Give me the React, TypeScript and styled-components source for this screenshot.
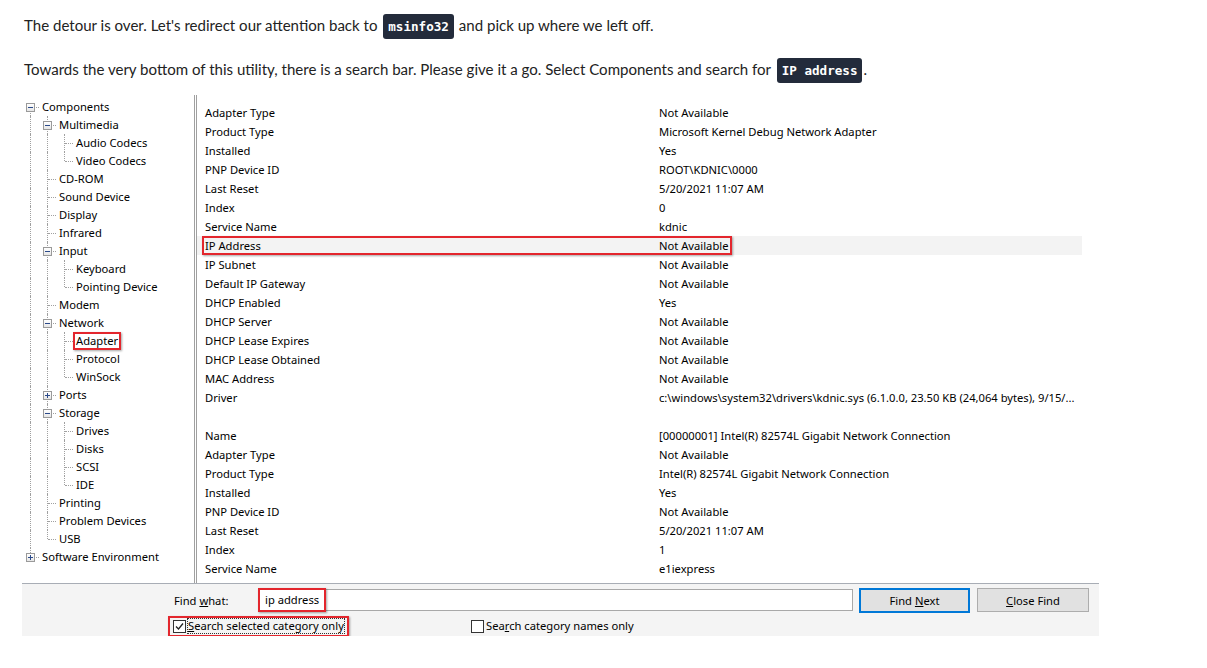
import React from "react";
import styled, { createGlobalStyle } from "styled-components";

const Global = createGlobalStyle`
  html, body { margin: 0; padding: 0; background: #ffffff; }
  body { font-family: "Lato", "Open Sans", sans-serif; color: #1f1f1f; }
`;

const Page = styled.div`
  padding: 13px 24px 0 24px;
`;

const Para = styled.p<{ $gap?: number }>`
  margin: ${(p) => p.$gap ?? 0}px 0 0 0;
  font-family: "Lato", "Open Sans", sans-serif;
  font-size: 15.05px;
  line-height: 24px;
  color: #222;
`;

const Code = styled.code`
  display: inline-block;
  background: #232b3b;
  color: #ffffff;
  font-family: "DejaVu Sans Mono", "Liberation Mono", monospace;
  font-weight: bold;
  font-size: 12.6px;
  line-height: 19px;
  padding: 3px 5px;
  border-radius: 3px;
  margin: 0 1px 0 2px;
`;

const Shot = styled.div`
  margin: 12px 0 0 -2px;
  width: 1077px;
  display: flex;
  flex-direction: column;
  font-family: "Noto Sans", "Open Sans", sans-serif;
  font-size: 11.2px;
  color: #000;
`;

const Panes = styled.div`
  display: flex;
  height: 488px;
  border-bottom: 1px solid #a8adb5;
`;

const Tree = styled.div`
  width: 172px;
  padding-top: 3px;
  border-right: 1px solid #a0a0a0;
  overflow: hidden;
`;

const Splitter = styled.div`
  width: 1px;
  background: #ffffff;
  border-right: 1px solid #a0a0a0;
`;

const TreeRow = styled.div`
  display: flex;
  height: 18px;
  align-items: center;
`;

type VLine = "full" | "top" | "bottom" | "none";

const Guide = styled.div<{ $v: VLine; $h: boolean }>`
  position: relative;
  width: 17px;
  height: 18px;
  flex: none;
  &::before {
    content: "";
    display: ${(p) => (p.$v === "none" ? "none" : "block")};
    position: absolute;
    left: 8px;
    top: ${(p) => (p.$v === "bottom" ? "9px" : "0")};
    height: ${(p) => (p.$v === "full" ? "18px" : "9px")};
    border-left: 1px dotted #a0a0a0;
  }
  &::after {
    content: "";
    display: ${(p) => (p.$h ? "block" : "none")};
    position: absolute;
    left: 9px;
    top: 9px;
    width: 8px;
    border-top: 1px dotted #a0a0a0;
  }
`;

const Expander = styled.span`
  position: absolute;
  left: 4px;
  top: 5px;
  width: 7px;
  height: 7px;
  border: 1px solid #9a9a9a;
  background: linear-gradient(#ffffff, #e6e6e6);
  z-index: 1;
  svg { display: block; }
`;

const TreeLabel = styled.span<{ $marked?: boolean }>`
  white-space: nowrap;
  line-height: 14px;
  padding: 0 1px;
  border: 2px solid ${(p) => (p.$marked ? "#e3262d" : "transparent")};
  box-shadow: ${(p) => (p.$marked ? "1px 1px 2px rgba(0,0,0,0.35)" : "none")};
`;

const Details = styled.div`
  flex: 1;
  padding-top: 8px;
  overflow: hidden;
`;

const DRow = styled.div<{ $hl?: boolean }>`
  position: relative;
  width: 885px;
  height: 19px;
  display: grid;
  grid-template-columns: 454px 1fr;
  align-items: center;
  padding-left: 8px;
  box-sizing: border-box;
  background: ${(p) => (p.$hl ? "#f3f3f3" : "transparent")};
  white-space: nowrap;
`;

const RedMark = styled.div`
  position: absolute;
  left: 5px;
  top: 0;
  width: 526px;
  height: 15px;
  border: 2px solid #e3262d;
  box-shadow: 1px 1px 2px rgba(0, 0, 0, 0.35);
`;

const FindBar = styled.div`
  background: #f4f4f4;
  height: 52px;
  box-sizing: border-box;
  padding: 3px 0 0 152px;
  display: flex;
  flex-direction: column;
  gap: 3px;
`;

const FindLine = styled.div`
  display: flex;
  align-items: center;
  height: 26px;
`;

const FindLabel = styled.span`
  width: 84px;
  flex: none;
`;

const Field = styled.div`
  width: 593px;
  height: 20px;
  border: 1px solid #a8a8a8;
  background: #ffffff;
  display: flex;
  align-items: center;
  margin-right: 6px;
`;

const FieldText = styled.span`
  border: 2px solid #e3262d;
  box-shadow: 1px 1px 2px rgba(0, 0, 0, 0.35);
  padding: 1px 5px 2px 5px;
  margin-left: -1px;
  line-height: 17px;
`;

const Button = styled.div<{ $focus?: boolean }>`
  width: ${(p) => (p.$focus ? "107px" : "110px")};
  height: ${(p) => (p.$focus ? "21px" : "22px")};
  border: ${(p) => (p.$focus ? "2px solid #0078d7" : "1px solid #adadad")};
  background: #e1e1e1;
  display: flex;
  align-items: center;
  justify-content: center;
  margin-right: 7px;
`;

const CheckLine = styled.div`
  display: flex;
  align-items: center;
  height: 20px;
`;

const CheckItem = styled.div<{ $marked?: boolean; $width: number; $offset?: number }>`
  display: flex;
  align-items: center;
  width: ${(p) => p.$width}px;
  box-sizing: border-box;
  height: 21px;
  margin-left: ${(p) => (p.$offset ?? 0) - 6}px;
  padding-left: ${(p) => (p.$marked ? "3px" : "5px")};
  border: ${(p) => (p.$marked ? "2px solid #e3262d" : "none")};
  box-shadow: ${(p) => (p.$marked ? "1px 1px 2px rgba(0,0,0,0.35)" : "none")};
`;

const Box = styled.span`
  width: 11px;
  height: 11px;
  border: 1px solid #333;
  background: #fff;
  flex: none;
  margin-right: 2px;
  svg { display: block; }
`;

const CheckText = styled.span<{ $focus?: boolean }>`
  outline: ${(p) => (p.$focus ? "1px dotted #333" : "none")};
  line-height: 14px;
`;

type Node = { label: string; level: number; exp?: "minus" | "plus"; marked?: boolean };

const nodes: Node[] = [
  { label: "Components", level: 0, exp: "minus" },
  { label: "Multimedia", level: 1, exp: "minus" },
  { label: "Audio Codecs", level: 2 },
  { label: "Video Codecs", level: 2 },
  { label: "CD-ROM", level: 1 },
  { label: "Sound Device", level: 1 },
  { label: "Display", level: 1 },
  { label: "Infrared", level: 1 },
  { label: "Input", level: 1, exp: "minus" },
  { label: "Keyboard", level: 2 },
  { label: "Pointing Device", level: 2 },
  { label: "Modem", level: 1 },
  { label: "Network", level: 1, exp: "minus" },
  { label: "Adapter", level: 2, marked: true },
  { label: "Protocol", level: 2 },
  { label: "WinSock", level: 2 },
  { label: "Ports", level: 1, exp: "plus" },
  { label: "Storage", level: 1, exp: "minus" },
  { label: "Drives", level: 2 },
  { label: "Disks", level: 2 },
  { label: "SCSI", level: 2 },
  { label: "IDE", level: 2 },
  { label: "Printing", level: 1 },
  { label: "Problem Devices", level: 1 },
  { label: "USB", level: 1 },
  { label: "Software Environment", level: 0, exp: "plus" },
];

const hasNext = (i: number) => {
  const L = nodes[i].level;
  for (let j = i + 1; j < nodes.length; j++) {
    if (nodes[j].level < L) return false;
    if (nodes[j].level === L) return true;
  }
  return false;
};

const ancestorAt = (i: number, k: number) => {
  for (let j = i - 1; j >= 0; j--) if (nodes[j].level === k) return j;
  return -1;
};

const guidesFor = (i: number) => {
  const n = nodes[i];
  const out: { v: VLine; h: boolean }[] = [];
  for (let k = 0; k < n.level; k++) {
    const a = ancestorAt(i, k);
    out.push({ v: a >= 0 && hasNext(a) ? "full" : "none", h: false });
  }
  const next = hasNext(i);
  if (i === 0) out.push({ v: "bottom", h: true });
  else out.push({ v: next ? "full" : "top", h: true });
  return out;
};

const details: [string, string, boolean?][] = [
  ["Adapter Type", "Not Available"],
  ["Product Type", "Microsoft Kernel Debug Network Adapter"],
  ["Installed", "Yes"],
  ["PNP Device ID", "ROOT\\KDNIC\\0000"],
  ["Last Reset", "5/20/2021 11:07 AM"],
  ["Index", "0"],
  ["Service Name", "kdnic"],
  ["IP Address", "Not Available", true],
  ["IP Subnet", "Not Available"],
  ["Default IP Gateway", "Not Available"],
  ["DHCP Enabled", "Yes"],
  ["DHCP Server", "Not Available"],
  ["DHCP Lease Expires", "Not Available"],
  ["DHCP Lease Obtained", "Not Available"],
  ["MAC Address", "Not Available"],
  ["Driver", "c:\\windows\\system32\\drivers\\kdnic.sys (6.1.0.0, 23.50 KB (24,064 bytes), 9/15/..."],
  ["", ""],
  ["Name", "[00000001] Intel(R) 82574L Gigabit Network Connection"],
  ["Adapter Type", "Not Available"],
  ["Product Type", "Intel(R) 82574L Gigabit Network Connection"],
  ["Installed", "Yes"],
  ["PNP Device ID", "Not Available"],
  ["Last Reset", "5/20/2021 11:07 AM"],
  ["Index", "1"],
  ["Service Name", "e1iexpress"],
];

const ExpIcon = ({ kind }: { kind: "minus" | "plus" }) => (
  <svg width="7" height="7" viewBox="0 0 7 7">
    <line x1="1" y1="3.5" x2="6" y2="3.5" stroke="#2b4a8a" strokeWidth="1" />
    {kind === "plus" && <line x1="3.5" y1="1" x2="3.5" y2="6" stroke="#2b4a8a" strokeWidth="1" />}
  </svg>
);

const Check = () => (
  <svg width="11" height="11" viewBox="0 0 11 11">
    <polyline points="2,5.5 4.5,8 9,2.5" fill="none" stroke="#222" strokeWidth="1.3" />
  </svg>
);

export default function App() {
  return (
    <>
      <Global />
      <Page>
        <Para>
          The detour is over. Let's redirect our attention back to <Code>msinfo32</Code> and pick up where we left off.
        </Para>
        <Para $gap={18}>
          Towards the very bottom of this utility, there is a search bar. Please give it a go. Select Components and
          search for <Code>IP address</Code>.
        </Para>
        <Shot>
          <Panes>
            <Tree>
              {nodes.map((n, i) => {
                const g = guidesFor(i);
                return (
                  <TreeRow key={i}>
                    {g.map((c, k) => (
                      <Guide key={k} $v={c.v} $h={c.h}>
                        {k === n.level && n.exp && (
                          <Expander>
                            <ExpIcon kind={n.exp} />
                          </Expander>
                        )}
                      </Guide>
                    ))}
                    <TreeLabel $marked={n.marked}>{n.label}</TreeLabel>
                  </TreeRow>
                );
              })}
            </Tree>
            <Splitter />
            <Details>
              {details.map(([a, b, hl], i) => (
                <DRow key={i} $hl={hl}>
                  {hl && <RedMark />}
                  <span>{a}</span>
                  <span>{b}</span>
                </DRow>
              ))}
            </Details>
          </Panes>
          <FindBar>
            <FindLine>
              <FindLabel>
                Find <u>w</u>hat:
              </FindLabel>
              <Field>
                <FieldText>ip address</FieldText>
              </Field>
              <Button $focus>
                <span>
                  Find <u>N</u>ext
                </span>
              </Button>
              <Button>
                <span>
                  <u>C</u>lose Find
                </span>
              </Button>
            </FindLine>
            <CheckLine>
              <CheckItem $marked $width={181}>
                <Box>
                  <Check />
                </Box>
                <CheckText $focus>
                  <u>S</u>earch selected category only
                </CheckText>
              </CheckItem>
              <CheckItem $width={300} $offset={123}>
                <Box />
                <CheckText>
                  Sea<u>r</u>ch category names only
                </CheckText>
              </CheckItem>
            </CheckLine>
          </FindBar>
        </Shot>
      </Page>
    </>
  );
}
